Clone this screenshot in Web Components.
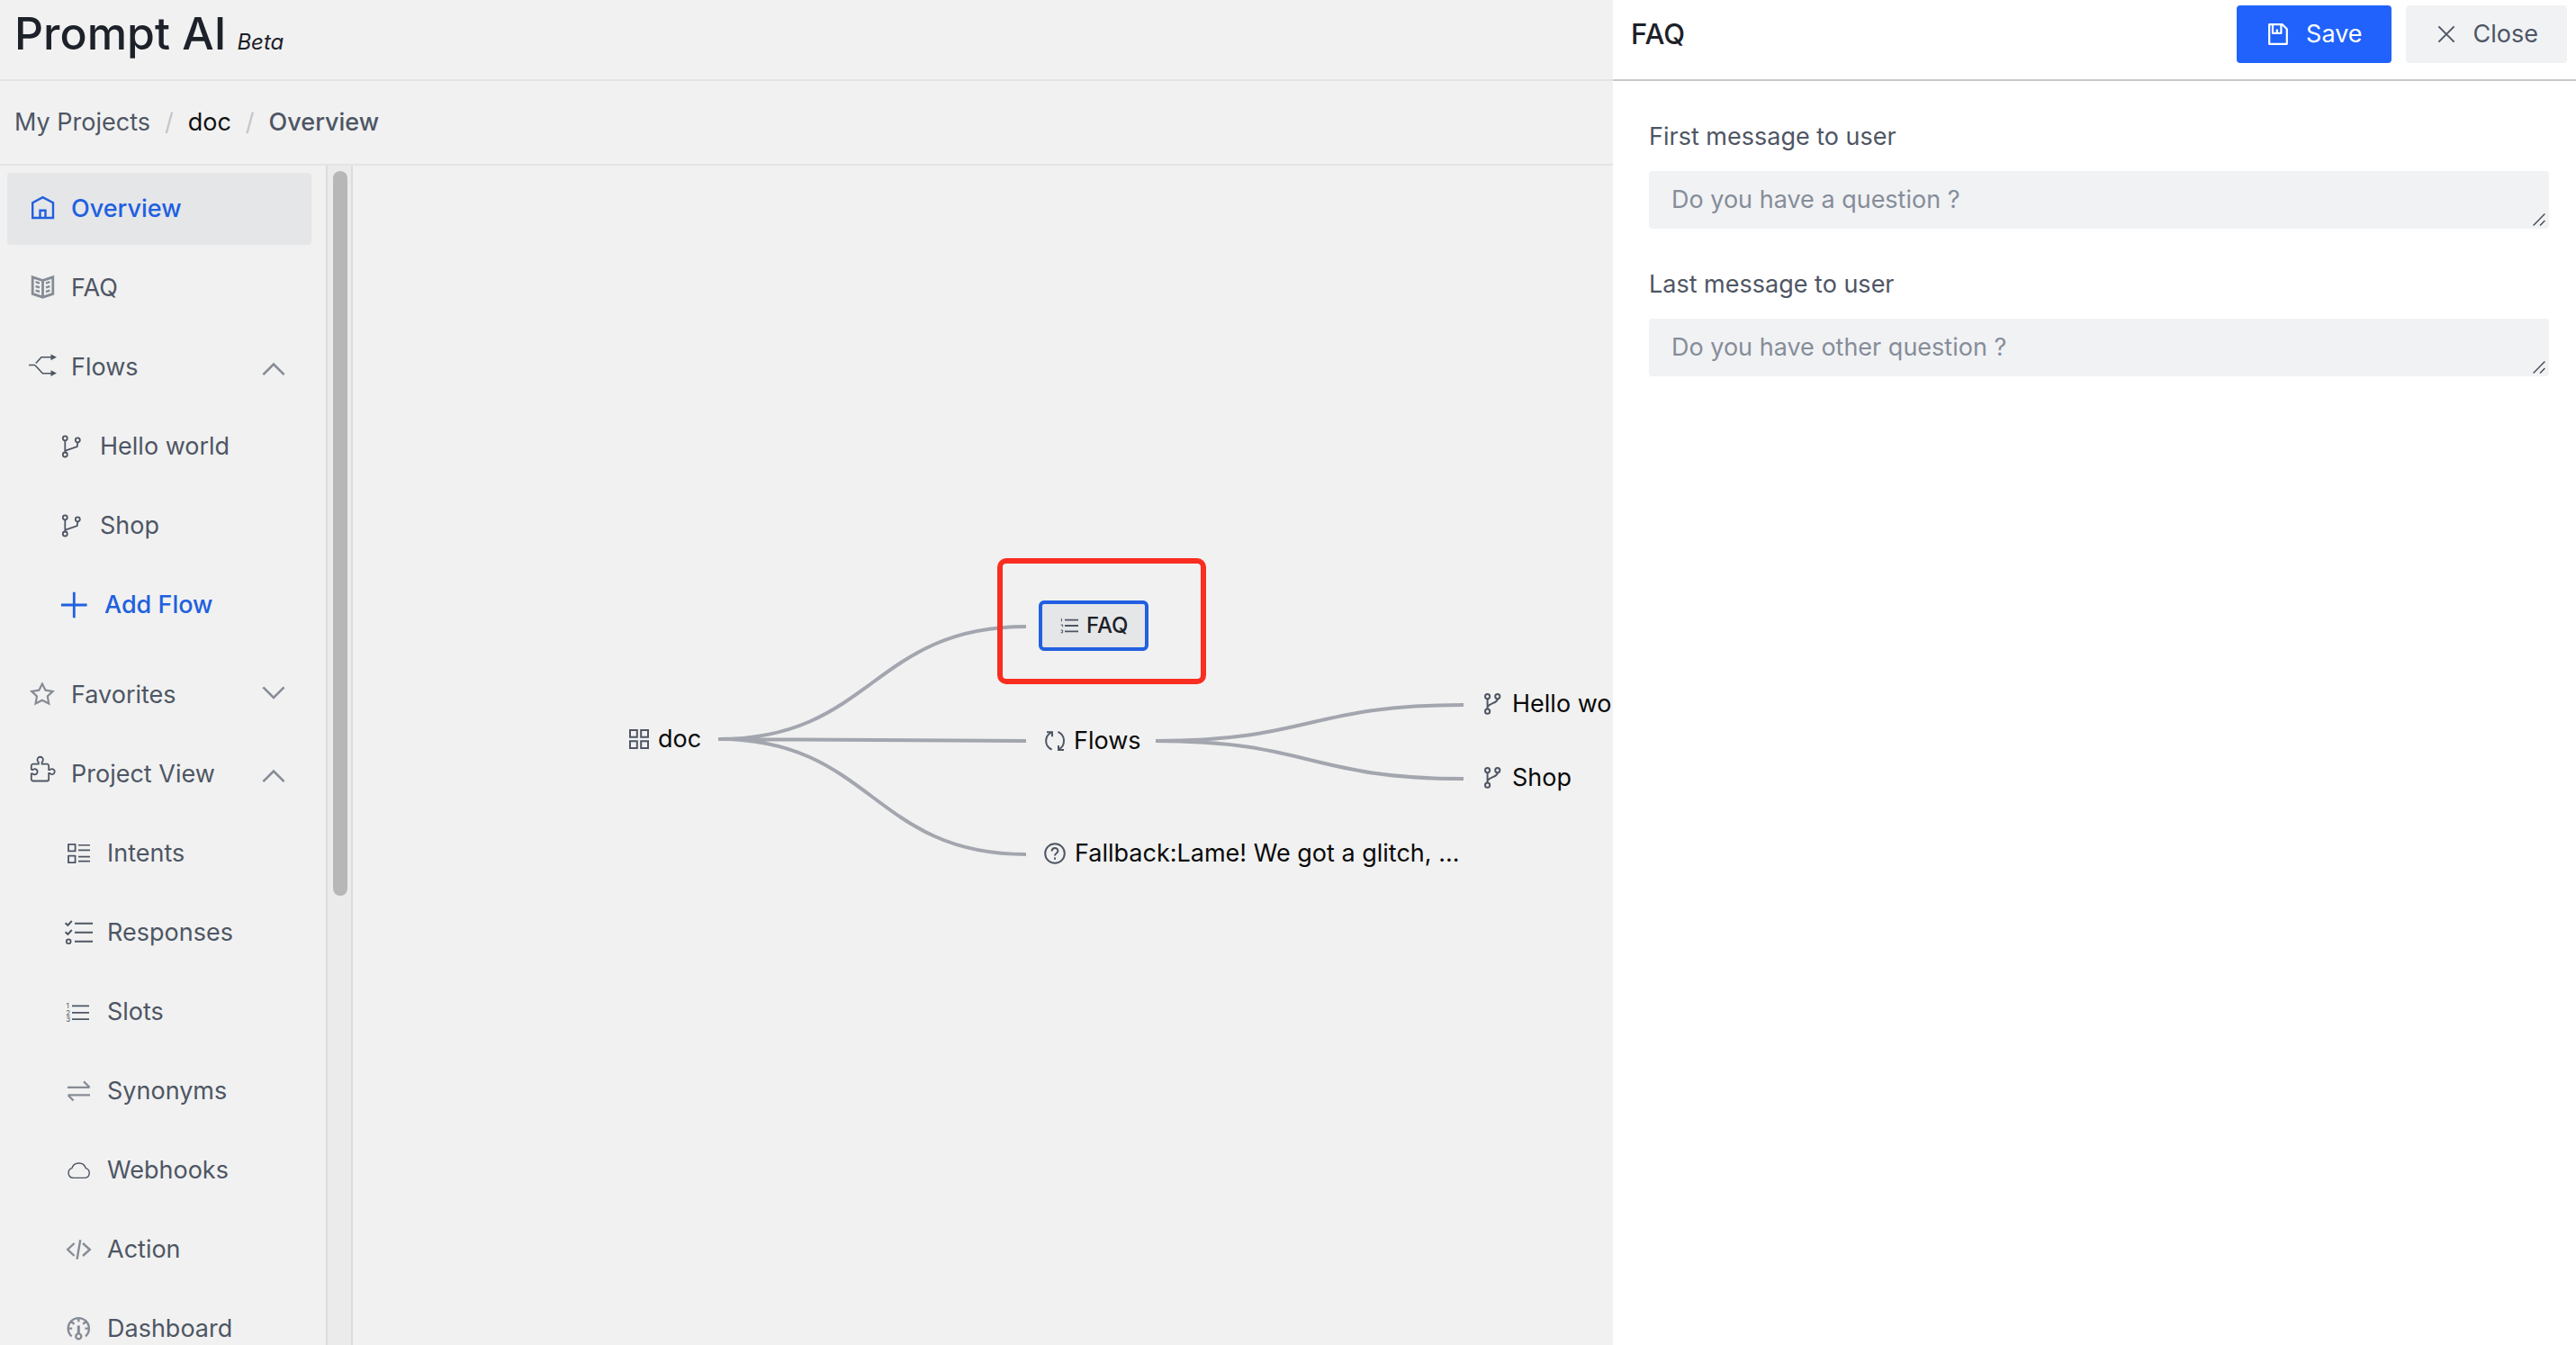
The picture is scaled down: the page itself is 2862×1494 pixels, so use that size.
<!DOCTYPE html>
<html lang="en">
<head>
<meta charset="utf-8">
<title>Prompt AI</title>
<style>
html, body { margin: 0; height: 100%; }
body {
  --bg: #f1f1f1; --line: #e4e4e4; --ink: #1d2129; --text: #4e5664; --muted: #868c96;
  --blue: #2160e0; --active: #e5e6e8; --field: #f1f2f4;
  font: 400 27px/40px Inter, "Liberation Sans", sans-serif;
  color: var(--text); background: var(--bg); overflow: hidden;
}
</style>
</head>
<body>
<prompt-app></prompt-app>
<script>
const ICONS = {
  home: [30, 30, `<path d="M4.2 25V8.2L15.5 2.2 27 8.2V25zM12.5 25v-8.3h6V25" stroke-width="2.4"/>`],
  book: [30, 30, `<path d="M4.2 2.8 15.5 6.6 26.8 2.8v18.6l-11.3 3.8-11.3-3.8zM15.5 6.6v18.6" stroke-width="2.8"/><path d="M7.6 8.2l4.4 1.4M7.6 13l4.4 1.4M7.6 17.6l4.4 1.4M23.4 8.2l-4.4 1.4M23.4 13l-4.4 1.4M23.4 17.6l-4.4 1.4" stroke-width="2.4"/>`],
  flows: [30, 30, `<path d="M0 12.5h7M7.8 10.5 14 3.8h11M7 12.7l8.4 9H25" stroke-width="1.6"/><path d="M24.5.4l6.5 3.4-6.5 3.4zM24.5 18.2l6.5 3.4-6.5 3.4z" fill="currentColor" stroke="none"/>`],
  branch: [30, 30, `<g stroke-width="1.8"><circle cx="8.3" cy="5.8" r="2.5"/><circle cx="8.3" cy="24" r="2.5"/><circle cx="22.3" cy="7.8" r="2.5"/><path d="M8.3 8.3v13.2M22.3 10.3l-.6 4.8L8.6 19.6"/></g>`],
  plus: [30, 30, `<path d="M0 15h28.6M14.3.8v28.4" stroke-width="2.8"/>`],
  star: [30, 30, `<path d="M14.9 2.6l3.6 7.1 8.1 1.2-5.8 5.6 1.4 7.9-7.3-3.7-7.3 3.7L9 16.5l-5.8-5.6 8.1-1.2z" stroke-width="2.2"/>`],
  puzzle: [30, 30, `<path d="M2.8 9.6V5.7a2 2 0 0 1 2-2h6V1.5a3.2 3.2 0 1 1 3.8 0v2.2h5.6a2 2 0 0 1 2 2v4.5h1.2a3 3 0 1 1 0 3.8h-1.2v6.5a2 2 0 0 1-2 2H4.8a2 2 0 0 1-2-2v-6.2h1.4a3.1 3.1 0 1 0 0-4.1z" stroke-width="1.8"/>`],
  intents: [30, 30, `<path d="M4 4.8h7.6v7.6H4zM4 17.6h7.6v7.6H4z" stroke-width="1.8" stroke-linejoin="round"/><path d="M15 5.8h13M15 11.4h13M15 18.6h13M15 23.6h13" stroke-width="1.6"/>`],
  responses: [30, 30, `<path d="M11 4.8h20M11 14.8h20M11 24.8h20M.6 4.2l2.8 2.6L7.8 2M.6 14.2l2.8 2.6L7.8 12" stroke-width="2"/><circle cx="4.2" cy="24.8" r="2.4" stroke-width="1.8"/>`],
  list: [30, 30, `<path d="M8 8.4h19M8 15.8h19M8 23.2h19" stroke-width="1.8"/><g fill="currentColor" stroke="none" font-size="8" font-family="Inter, sans-serif"><text x="1.6" y="11">1</text><text x="1.2" y="18.6">2</text><text x="1.2" y="26">3</text></g>`],
  swap: [30, 30, `<path d="M3 10.8h24.6M21 4.4l6.6 6.4M28 19.4H3.6M9.6 25.6l-6-6.2" stroke-width="2.2"/>`],
  cloud: [30, 30, `<path d="M9.4 23.4a5.5 5.5 0 0 1-1.6-10.7 8.2 8.2 0 0 1 15.6 0 5.5 5.5 0 0 1-1 10.7z" stroke-width="1.4"/>`],
  code: [30, 30, `<path d="M10.6 8 3.2 15l7.4 7M20 8l7.8 7-7.8 7M17.2 4.2l-3.6 21.6" stroke-width="2.4"/>`],
  gauge: [30, 30, `<path d="M7.6 23.4a11.6 11.6 0 1 1 15.4 0M15.3 3.2v4M4 14.6h4.2M26.6 14.6h-4.2M7.4 6.8l3 3M23.2 6.8l-3 3" stroke-width="2.4"/><path d="M15.3 20.6V11.4" stroke-width="3"/><circle cx="15.3" cy="23.4" r="3" stroke-width="2.4"/>`],
  up: [26, 30, `<path d="M1.4 23.2 13 11.6l11.6 11.6" stroke-width="2.6"/>`],
  down: [26, 30, `<path d="M1.4 6.4 13 18 24.6 6.4" stroke-width="2.6"/>`],
  grid: [22, 22, `<path d="M1 1h7.8v7.8H1zM13.2 1H21v7.8h-7.8zM1 13.2h7.8V21H1zM13.2 13.2H21V21h-7.8z" stroke-width="2"/>`],
  cycle: [22, 22, `<path d="M7.6 1.4C-1 5.4-1 16.6 7.6 20.6M14.4.8C23 4.6 23 16 15.6 20.2M2 1.2h6v5M21 21h-6v-5" stroke-width="2"/>`],
  help: [24, 24, `<circle cx="12" cy="12" r="10.8" stroke-width="2"/><path d="M8.6 9.6C8.6 4.8 15.4 5 15.4 9.2c0 2.6-3.4 2.4-3.4 5.4M12 16.4v2.4" stroke-width="2"/>`],
  fork: [22, 24, `<g stroke-width="2"><circle cx="4.6" cy="3.6" r="2.6"/><circle cx="4.6" cy="20.2" r="2.6"/><circle cx="15.8" cy="3.6" r="2.6"/><path d="M4.6 6v11.6M15.8 6.2c0 5-8 4.4-11 8.6"/></g>`],
  lines: [20, 20, `<path d="M5 3.6h15M5 10h15M5 16.4h15" stroke-width="1.8"/><path d="M1.4 2v3.4M.6 9h2v2.4M.6 15h2v2.8h-2" stroke-width="1"/>`],
  save: [22, 24, `<path d="M1.2 1.2h14.6l5 5v16.6H1.2zM5 1.4v9.4h9.4V1.4M9.8 10.4V6.6" stroke-width="2.2" stroke-linejoin="round"/>`],
  close: [20, 20, `<path d="M1.4 1.4l17.2 17.2M18.6 1.4 1.4 18.6" stroke-width="2"/>`],
  grip: [14, 14, `<path d="M.6 13.4 13.4.6M8 13.4l5.4-5.4" stroke-width="1.4"/>`]
};

const define = (name, render) => customElements.define(name, class extends HTMLElement {
  connectedCallback() {
    if (this.shadowRoot) return;
    this.attachShadow({ mode: 'open' }).innerHTML = render(this);
  }
});

define('ui-icon', el => {
  const [w, h, body] = ICONS[el.getAttribute('name')];
  return `<style>:host{display:block;flex:none}svg{display:block;overflow:visible}</style>
  <svg width="${w}" height="${h}" viewBox="0 0 ${w} ${h}" fill="none" stroke="currentColor" aria-hidden="true">${body}</svg>`;
});

define('app-header', () => `
<style>
:host{display:block;border-bottom:2px solid var(--line)}
header{display:flex;align-items:baseline;gap:12px;height:74px;padding:0 16px 14px;line-height:74px;color:var(--ink)}
h1{margin:0;font-size:50px;font-weight:500}
em{font-size:24px}
</style>
<header><h1>Prompt AI</h1><em>Beta</em></header>`);

define('bread-crumbs', () => `
<style>
:host{display:block;border-bottom:2px solid var(--line)}
nav{display:flex;gap:16px;padding:26px 16px}
a{color:inherit;text-decoration:none}
a.project{color:#111}
span{color:#c3c6cb}
[aria-current]{font-weight:500}
</style>
<nav aria-label="Breadcrumb"><a href="#">My Projects</a><span>/</span><a class="project" href="#">doc</a><span>/</span><a href="#" aria-current="page">Overview</a></nav>`);

define('nav-item', el => `
<style>
:host{display:block}
a{display:flex;align-items:center;gap:17px;height:80px;padding:0 29px 0 24px;border-radius:4px;color:var(--text);text-decoration:none}
:host([level=flow]) a{padding-left:56px}
:host([level=view]) a{padding-left:64px}
:host([level=add]) a{padding-left:60px;gap:18px;color:var(--blue);font-weight:500}
:host([level=add]){margin-bottom:12px}
:host([active]) a{background:var(--active);color:var(--blue);font-weight:500}
.label{flex:1;white-space:nowrap}
:host([muted]) .lead,.chevron{color:var(--muted)}
</style>
<a href="#"><ui-icon class="lead" name="${el.getAttribute('icon')}"></ui-icon><span class="label"><slot></slot></span>${
  el.hasAttribute('chevron') ? `<ui-icon class="chevron" name="${el.getAttribute('chevron')}"></ui-icon>` : ''}</a>`);

define('side-nav', () => `
<style>
:host{display:flex;flex:none;width:392px;overflow:hidden}
nav{flex:1;display:flex;flex-direction:column;gap:8px;padding:8px 16px 8px 8px}
.rail{box-sizing:border-box;width:30px;padding:6px 4px 6px 6px;background:#ebebeb;border:solid #dcdcdc;border-width:0 2px}
.thumb{height:62%;border-radius:8px;background:#b7b7b7}
</style>
<nav aria-label="Project">
<nav-item icon="home" active>Overview</nav-item>
<nav-item icon="book" muted>FAQ</nav-item>
<nav-item icon="flows" chevron="up">Flows</nav-item>
<nav-item icon="branch" level="flow">Hello world</nav-item>
<nav-item icon="branch" level="flow">Shop</nav-item>
<nav-item icon="plus" level="add">Add Flow</nav-item>
<nav-item icon="star" muted chevron="down">Favorites</nav-item>
<nav-item icon="puzzle" chevron="up">Project View</nav-item>
<nav-item icon="intents" level="view">Intents</nav-item>
<nav-item icon="responses" level="view">Responses</nav-item>
<nav-item icon="list" level="view">Slots</nav-item>
<nav-item icon="swap" level="view" muted>Synonyms</nav-item>
<nav-item icon="cloud" level="view">Webhooks</nav-item>
<nav-item icon="code" level="view" muted>Action</nav-item>
<nav-item icon="gauge" level="view" muted>Dashboard</nav-item>
</nav>
<div class="rail"><div class="thumb"></div></div>`);

define('flow-node', el => `
<style>
:host{position:absolute;display:flex;align-items:center;gap:10px;white-space:nowrap;color:#0a0a0a}
ui-icon{color:var(--text)}
:host([selected]){box-sizing:border-box;height:56px;padding:0 18px 0 20px;gap:9px;border:4px solid var(--blue);border-radius:6px;background:var(--active);font-size:24px;font-weight:500;color:var(--ink)}
</style>
<ui-icon name="${el.getAttribute('icon')}"></ui-icon><span><slot></slot></span>`);

/* Node and link coordinates share the canvas origin. */
define('flow-canvas', () => `
<style>
:host{display:block;position:relative;flex:1;overflow:hidden}
svg{position:absolute;left:0;top:0;width:100%;height:100%}
.focus{position:absolute;left:716px;top:436px;width:220px;height:128px;border:6px solid #f92d20;border-radius:10px}
</style>
<svg fill="none" stroke="#a3a6ae" stroke-width="4" aria-hidden="true">
<path d="M406 637C577 637 577 512 748 512M406 637L748 639M406 637C577 637 577 765 748 765M892 639C1063 639 1063 599 1234 599M892 639C1063 639 1063 681 1234 681"/>
</svg>
<flow-node icon="grid" style="left:307px;top:617px">doc</flow-node>
<flow-node icon="lines" selected style="left:762px;top:483px">FAQ</flow-node>
<flow-node icon="cycle" style="left:769px;top:619px">Flows</flow-node>
<flow-node icon="help" style="left:768px;top:744px">Fallback:Lame! We got a glitch, ...</flow-node>
<flow-node icon="fork" style="left:1256px;top:578px">Hello world</flow-node>
<flow-node icon="fork" style="left:1256px;top:660px">Shop</flow-node>
<div class="focus"></div>`);

define('ui-button', el => `
<style>
:host{display:block}
button{display:flex;align-items:center;gap:20px;height:64px;padding:0 32px 0 35px;border:0;border-radius:4px;background:var(--field);color:var(--text);font:inherit}
:host([primary]) button{background:#2062fb;color:#fff}
</style>
<button type="button"><ui-icon name="${el.getAttribute('icon')}"></ui-icon><slot></slot></button>`);

define('message-field', el => `
<style>
:host{display:flex;flex-direction:column;gap:18px}
.box{position:relative;display:flex}
textarea{box-sizing:border-box;flex:1;height:64px;padding:12px 25px;border:0;border-radius:4px;background:var(--field);color:var(--text);font:inherit;resize:none;outline:0;overflow:hidden}
textarea::placeholder{color:#868d99;opacity:1}
ui-icon{position:absolute;right:4px;bottom:3px;color:#444a55;pointer-events:none}
</style>
<label for="message">${el.getAttribute('label')}</label>
<div class="box"><textarea id="message" rows="1" placeholder="${el.getAttribute('placeholder')}"></textarea><ui-icon name="grip"></ui-icon></div>`);

define('faq-drawer', () => `
<style>
:host{position:absolute;top:0;right:0;bottom:0;width:1070px;max-width:100%;background:#fff}
header{display:flex;align-items:center;gap:16px;padding:6px 10px 18px 20px;border-bottom:2px solid #c9c9c9}
h2{flex:1;margin:0;font-size:31px;font-weight:500;color:var(--ink)}
form{display:flex;flex-direction:column;gap:42px;padding:42px 30px 42px 40px}
</style>
<header><h2>FAQ</h2><ui-button icon="save" primary>Save</ui-button><ui-button icon="close">Close</ui-button></header>
<form>
<message-field label="First message to user" placeholder="Do you have a question ?"></message-field>
<message-field label="Last message to user" placeholder="Do you have other question ?"></message-field>
</form>`);

define('prompt-app', () => `
<style>
:host{position:relative;display:flex;flex-direction:column;height:100vh;overflow:hidden}
main{display:flex;flex:1;min-height:0}
</style>
<app-header></app-header>
<bread-crumbs></bread-crumbs>
<main><side-nav></side-nav><flow-canvas></flow-canvas></main>
<faq-drawer></faq-drawer>`);
</script>
</body>
</html>
